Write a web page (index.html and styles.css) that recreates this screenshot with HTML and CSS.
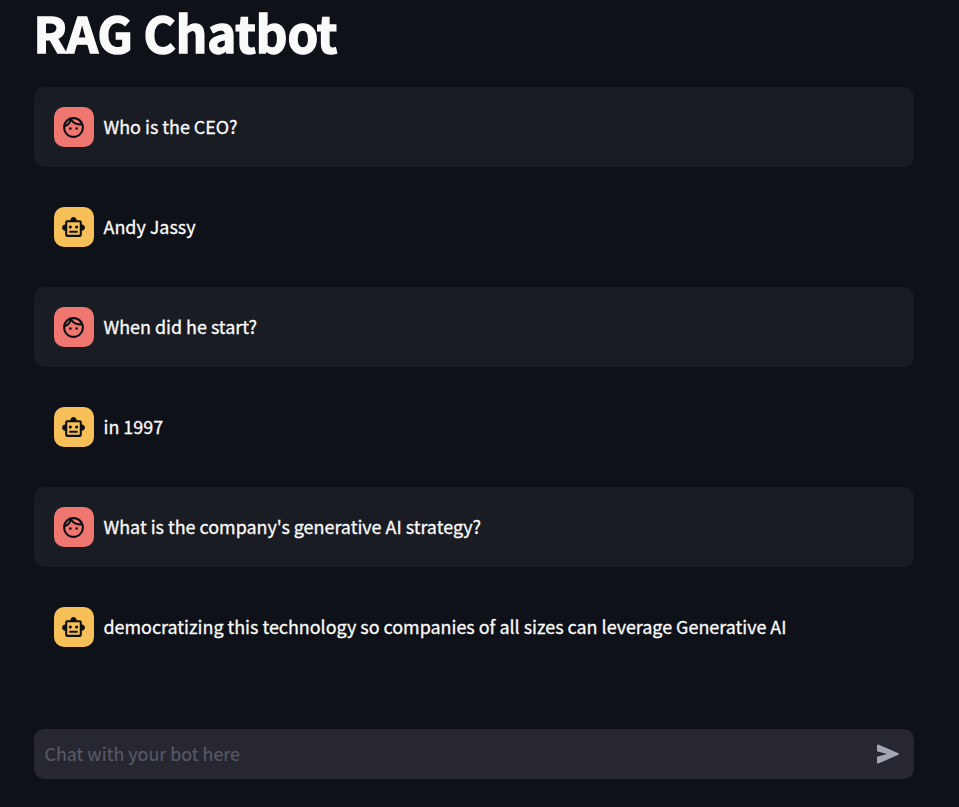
FILE: index.html
```html
<!DOCTYPE html>
<html lang="en">
<head>
<meta charset="utf-8">
<title>RAG Chatbot</title>
<link rel="stylesheet" href="styles.css">
</head>
<body>
<svg width="0" height="0" class="defs" aria-hidden="true">
<symbol id="face" viewBox="0 0 24 24"><path d="M10.25 13c0 .69-.56 1.25-1.25 1.25S7.75 13.69 7.75 13s.56-1.25 1.25-1.25 1.25.56 1.25 1.25zM15 11.75c-.69 0-1.25.56-1.25 1.25s.56 1.25 1.25 1.25 1.25-.56 1.25-1.25-.56-1.25-1.25-1.25zm7 .25c0 5.52-4.48 10-10 10S2 17.52 2 12 6.48 2 12 2s10 4.48 10 10zM10.66 4.12C12.06 6.44 14.6 8 17.5 8c.46 0 .91-.05 1.34-.12C17.44 5.56 14.9 4 12 4c-.46 0-.91.05-1.34.12zM4.42 9.47c1.71-.97 3.03-2.55 3.66-4.44C6.37 6 5.05 7.58 4.42 9.47zM20 12c0-.78-.12-1.53-.33-2.24-.7.15-1.42.24-2.17.24-3.13 0-5.92-1.44-7.76-3.69C8.69 8.87 6.6 10.88 4 11.86c.01.04 0 .09 0 .14 0 4.41 3.59 8 8 8s8-3.59 8-8z"/></symbol>
<symbol id="robot" viewBox="0 0 24 24"><path d="M20 9V7c0-1.1-.9-2-2-2h-3c0-1.66-1.34-3-3-3S9 3.34 9 5H6c-1.1 0-2 .9-2 2v2c-1.66 0-3 1.34-3 3s1.34 3 3 3v4c0 1.1.9 2 2 2h12c1.1 0 2-.9 2-2v-4c1.66 0 3-1.34 3-3s-1.34-3-3-3zm-2 10H6V7h12v12zm-9-6c-.83 0-1.5-.67-1.5-1.5S8.17 10 9 10s1.5.67 1.5 1.5S9.83 13 9 13zm7.5-1.5c0 .83-.67 1.5-1.5 1.5s-1.5-.67-1.5-1.5.67-1.5 1.5-1.5 1.5.67 1.5 1.5zM8 15h8v2H8v-2z"/></symbol>
</svg>
<main class="app">
<h1 class="title">RAG Chatbot</h1>
<div class="chat">
<div class="message user"><div class="avatar"><svg><use href="#face"/></svg></div><p>Who is the CEO?</p></div>
<div class="message bot"><div class="avatar"><svg><use href="#robot"/></svg></div><p>Andy Jassy</p></div>
<div class="message user"><div class="avatar"><svg><use href="#face"/></svg></div><p>When did he start?</p></div>
<div class="message bot"><div class="avatar"><svg><use href="#robot"/></svg></div><p>in 1997</p></div>
<div class="message user"><div class="avatar"><svg><use href="#face"/></svg></div><p>What is the company's generative AI strategy?</p></div>
<div class="message bot"><div class="avatar"><svg><use href="#robot"/></svg></div><p>democratizing this technology so companies of all sizes can leverage Generative AI</p></div>
</div>
<div class="input">
<span class="placeholder">Chat with your bot here</span>
<svg class="send" viewBox="0 0 24 20"><path d="M2.3 .5 22.5 9.2q1.2.8 0 1.6L2.3 19.5q-1.3.3-1.3-1V12.7L11 10 1 7.3V1.5q0-1.3 1.3-1Z"/></svg>
</div>
</main>
</body>
</html>
```

FILE: styles.css
```css
* { box-sizing: border-box; }
body {
  margin: 0;
  height: 807px;
  overflow: hidden;
  background: #0e1117;
  color: #fafafa;
  font-family: "Noto Sans CJK JP", "Open Sans", sans-serif;
}
.defs { display: none; }
.app { width: 880px; margin-left: 34px; }
.title {
  margin: 0 0 0 -0.5px;
  height: 87px;
  line-height: 63px;
  font-size: 49.2px;
  font-weight: 700;
  letter-spacing: -0.1px;
  -webkit-text-stroke: 1.5px currentColor;
  white-space: nowrap;
}
.chat { display: flex; flex-direction: column; gap: 20px; }
.message {
  display: flex;
  align-items: center;
  gap: 9.5px;
  height: 80px;
  padding: 20px;
  border-radius: 10px;
}
.message p {
  margin: 0;
  padding-bottom: 2px;
  font-size: 17.92px;
  line-height: 30px;
  -webkit-text-stroke: 0.3px currentColor;
  white-space: nowrap;
}
.user { background: #1a1c24; }
.avatar {
  display: flex;
  align-items: center;
  justify-content: center;
  width: 40px;
  height: 40px;
  padding-right: 1px;
  border-radius: 10px;
  color: #0e1117;
  background: #f0776f;
}
.bot .avatar { background: #f6bf57; }
.avatar svg { width: 25px; height: 25px; fill: currentColor; }
.input {
  display: flex;
  align-items: center;
  justify-content: space-between;
  height: 50px;
  margin-top: 62px;
  padding: 0 14px 0 10.5px;
  border-radius: 10px;
  background: #262730;
}
.placeholder {
  padding-bottom: 2px;
  font-size: 17.92px;
  color: #585966;
  -webkit-text-stroke: 0.2px currentColor;
}
.send { width: 24px; height: 20px; fill: #a3a8b4; }
```
